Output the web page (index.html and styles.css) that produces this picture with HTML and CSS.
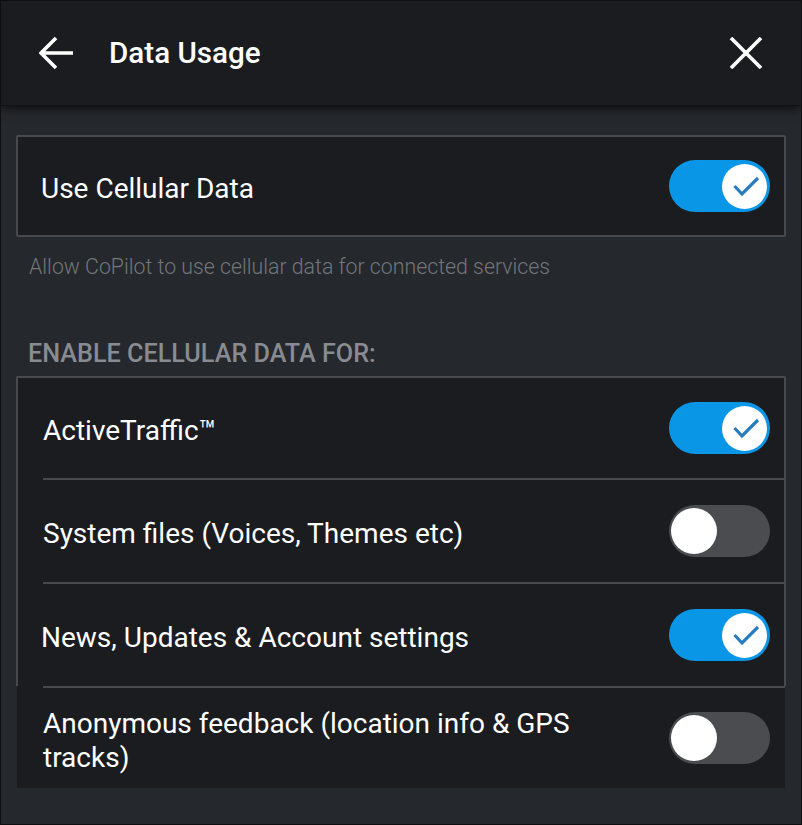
FILE: index.html
```html
<!DOCTYPE html>
<html>
<head>
<meta charset="utf-8">
<link rel="stylesheet" href="styles.css">
</head>
<body>
<div class="screen">
  <header class="topbar">
    <svg class="icon back" width="36" height="34" viewBox="0 0 36 34"><path d="M2 17 H34 M17 2 L2 17 L17 32" fill="none" stroke="#fff" stroke-width="3.6" stroke-linecap="butt" stroke-linejoin="miter"/></svg>
    <h1 class="title">Data Usage</h1>
    <svg class="icon close" width="34" height="32" viewBox="0 0 34 32"><path d="M2 1 L32 31 M32 1 L2 31" fill="none" stroke="#fff" stroke-width="3.6"/></svg>
  </header>
  <main class="content">
    <section class="card">
      <div class="row single">
        <span class="label">Use Cellular Data</span>
        <span class="toggle on"><span class="knob"><svg width="45" height="45" viewBox="0 0 45 45"><path d="M12.5 22 L20 30 L36 14" fill="none" stroke="#2a7cc0" stroke-width="3.2"/></svg></span></span>
      </div>
    </section>
    <p class="hint">Allow CoPilot to use cellular data for connected services</p>
    <h2 class="section">ENABLE CELLULAR DATA FOR:</h2>
    <section class="group">
      <div class="row first">
        <span class="label">ActiveTraffic™</span>
        <span class="toggle on"><span class="knob"><svg width="45" height="45" viewBox="0 0 45 45"><path d="M12.5 22 L20 30 L36 14" fill="none" stroke="#2a7cc0" stroke-width="3.2"/></svg></span></span>
      </div>
      <div class="row">
        <span class="label">System files (Voices, Themes etc)</span>
        <span class="toggle off"><span class="knob"></span></span>
      </div>
      <div class="row">
        <span class="label shift">News, Updates &amp; Account settings</span>
        <span class="toggle on"><span class="knob"><svg width="45" height="45" viewBox="0 0 45 45"><path d="M12.5 22 L20 30 L36 14" fill="none" stroke="#2a7cc0" stroke-width="3.2"/></svg></span></span>
      </div>
    </section>
    <section class="last">
      <div class="row">
        <span class="label wrap">Anonymous feedback (location info &amp; GPS tracks)</span>
        <span class="toggle off"><span class="knob"></span></span>
      </div>
    </section>
  </main>
</div>
</body>
</html>
```

FILE: styles.css
```css
html, body {
  margin: 0;
  padding: 0;
  background: #25282c;
}
.screen {
  width: 802px;
  height: 825px;
  box-sizing: border-box;
  border: 1px solid #0e0f11;
  background: #25282c;
  overflow: hidden;
  font-family: Roboto, "Noto Sans", sans-serif;
  color: #fff;
}
.topbar {
  height: 104px;
  background: #1a1c1f;
  display: flex;
  align-items: center;
  padding: 0 38px 0 38px;
  position: relative;
  z-index: 1;
  box-shadow: 0 1px 0 #111214, 0 3px 10px rgba(0,0,0,0.75);
}
.icon { display: block; flex: none; }
.title {
  margin: 0 0 0 34px;
  font-size: 29.6px;
  font-weight: 500;
  flex: 1;
}
.content {
  padding: 30px 15px 0 15px;
}
.card {
  background: #1a1c1f;
  border: 2px solid #46494d;
  border-radius: 2px;
  height: 98px;
  box-sizing: content-box;
}
.row {
  display: flex;
  align-items: center;
  justify-content: space-between;
  height: 102px;
  margin-left: 25px;
  padding-right: 14px;
  border-top: 2px solid #46494d;
}
.row.single {
  border-top: 0;
  height: 98px;
  margin-left: 23px;
  padding-right: 14px;
}
.row.first { border-top: 0; height: 100px; }
.label {
  font-size: 28px;
  line-height: 34px;
  color: #fff;
  margin-top: 5px;
}
.label.shift { margin-left: -2px; }
.label.wrap { max-width: 560px; }
.hint {
  margin: 18px 0 0 13px;
  font-size: 21.3px;
  line-height: 24px;
  font-weight: 300;
  color: #73767b;
}
.section {
  margin: 61px 0 0 12px;
  font-size: 25.2px;
  line-height: 28px;
  font-weight: 500;
  color: #888b92;
}
.group {
  margin-top: 8px;
  background: #1a1c1f;
  border: 2px solid #46494d;
  border-bottom: 0;
  border-radius: 2px 2px 0 0;
}
.last {
  background: #1a1c1f;
  margin: 0 1px;
}
.last .row { margin-left: 26px; padding-right: 15px; height: 100px; }
.toggle {
  flex: none;
  width: 101px;
  height: 52px;
  border-radius: 26px;
  position: relative;
  display: block;
}
.toggle.on { background: #0a96e6; }
.toggle.off { background: #4a4c50; }
.knob {
  position: absolute;
  top: 4px;
  width: 45px;
  height: 45px;
  border-radius: 50%;
  background: #fff;
  display: block;
}
.toggle.on .knob { right: 3px; }
.toggle.off .knob { left: 2px; top: 3px; width: 46px; height: 46px; }
.knob svg { display: block; }
```
